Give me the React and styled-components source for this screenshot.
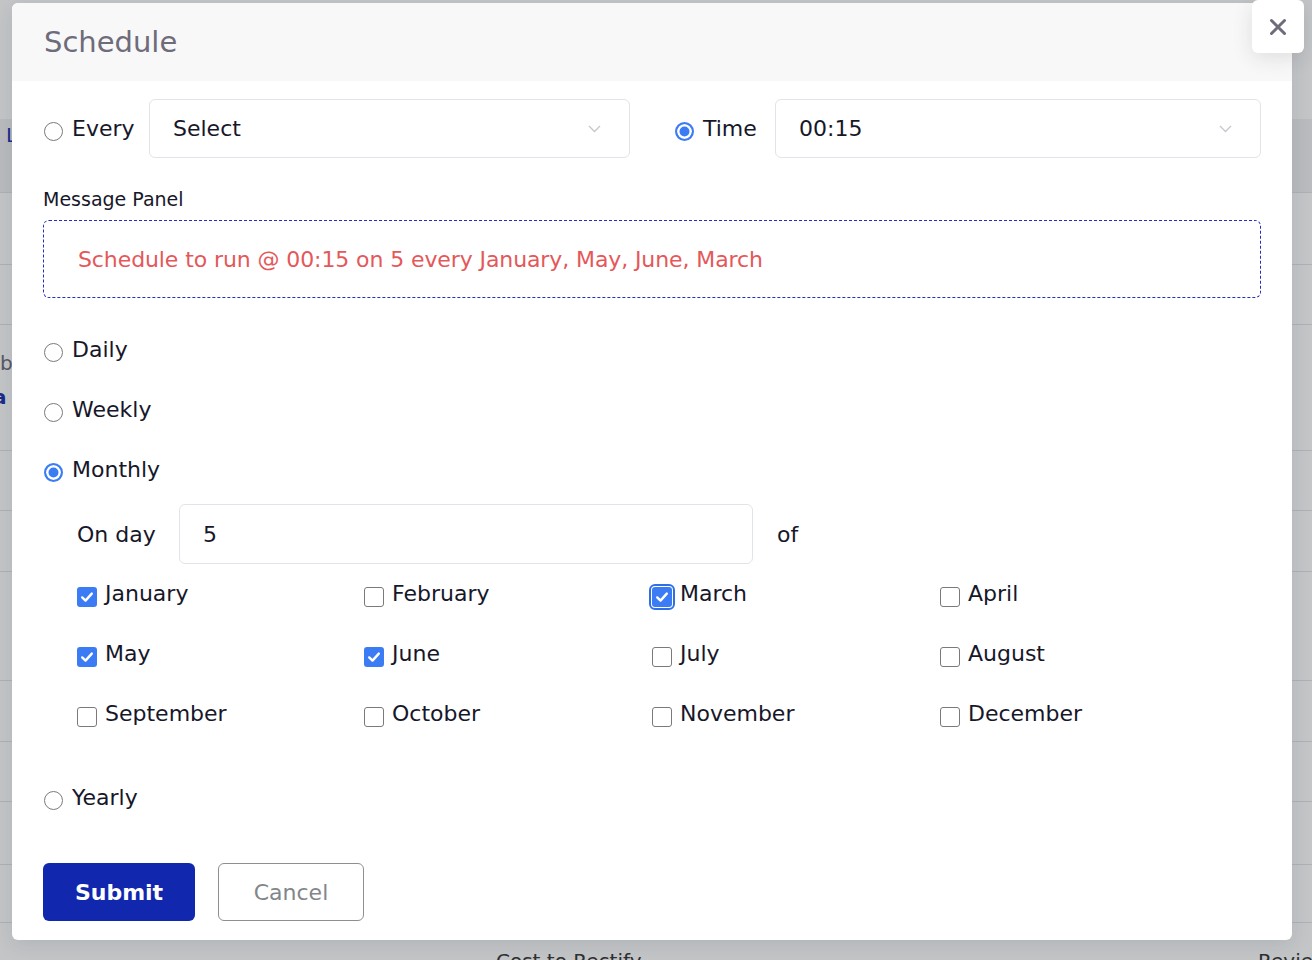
import React from 'react'
import styled, { createGlobalStyle } from 'styled-components'

const GlobalStyle = createGlobalStyle`
  html, body {
    margin: 0;
    padding: 0;
  }
  body {
    font-family: "DejaVu Sans", "Open Sans", sans-serif;
    background: #ffffff;
    color: #17172a;
    overflow: hidden;
  }
  * {
    box-sizing: border-box;
  }
`

const Screen = styled.div`
    position: relative;
    width: 1312px;
    height: 960px;
    overflow: hidden;
`

/* page behind the modal */
const BgPage = styled.div`
    padding-top: 119px;
`

const BgHead = styled.div`
    height: 74px;
    background: #f1f2f3;
    display: flex;
    align-items: flex-start;
    padding: 4px 0 0 6px;
    color: #1a2db0;
    font-size: 20px;
    border-bottom: 1px solid #e3e4e6;
`

const BgRow = styled.div`
    height: ${props => props.h}px;
    border-bottom: 1px solid #e3e4e6;
    display: flex;
    flex-direction: column;
    justify-content: flex-start;
    padding-top: 28px;
    gap: 14px;
`

const BgFrag = styled.span`
    display: block;
    margin-left: ${props => props.shift}px;
    font-size: 20px;
    font-weight: ${props => props.bold ? 700 : 400};
    color: ${props => props.blue ? '#1a2db0' : '#6e6b7b'};
    line-height: 20px;
`

const BgFoot = styled.div`
    display: grid;
    grid-template-columns: 496px 762px auto;
    padding-top: 26px;
    font-size: 20px;
    color: #333;
`

/* overlay + modal */
const Backdrop = styled.div`
    position: absolute;
    inset: 0;
    background: rgba(34, 41, 47, 0.27);
    padding: 3px 20px 0 12px;
`

const Modal = styled.div`
    position: relative;
    width: 1280px;
    background: #ffffff;
    border-radius: 6px;
    box-shadow: 0 5px 20px rgba(34, 41, 47, 0.1);
`

const Header = styled.div`
    height: 78px;
    background: #f8f8f8;
    border-radius: 6px 6px 0 0;
    padding: 0 32px;
    display: flex;
    align-items: center;
`

const Title = styled.h4`
    margin: 0;
    font-size: 29px;
    font-weight: 400;
    color: #6e6b7b;
`

const Close = styled.button`
    position: absolute;
    top: -3px;
    right: -12px;
    width: 52px;
    height: 53px;
    border: none;
    border-radius: 6px;
    background: #ffffff;
    box-shadow: 0 5px 20px rgba(34, 41, 47, 0.12);
    display: flex;
    align-items: center;
    justify-content: center;
    padding: 0;
`

const Body = styled.div`
    padding: 18px 31px 19px 31px;
    display: flex;
    flex-direction: column;
`

const TopRow = styled.div`
    display: flex;
    align-items: center;
    height: 59px;
`

const Choice = styled.label`
    display: flex;
    align-items: center;
    height: ${props => props.h || 60}px;
    font-size: 22px;
    line-height: 26px;
`

const Radio = styled.span`
    flex: none;
    width: 19px;
    height: 19px;
    margin: 5px 9px 0 ${props => props.ml ?? 1}px;
    border-radius: 50%;
    border: ${props => props.on ? '2px solid #3b7cf5' : '1.5px solid #7a7a7a'};
    background: ${props => props.on ? '#3b7cf5' : '#ffffff'};
    box-shadow: ${props => props.on ? 'inset 0 0 0 2.5px #ffffff' : 'none'};
`

const ChoiceText = styled.span`
    display: inline-block;
    width: ${props => props.w ? props.w + 'px' : 'auto'};
`

const Select = styled.div`
    width: ${props => props.w ? props.w + 'px' : 'auto'};
    flex: ${props => props.w ? 'none' : '1'};
    height: 59px;
    border: 1px solid #e3e4e9;
    border-radius: 6px;
    padding: 0 28px 0 23px;
    display: flex;
    align-items: center;
    justify-content: space-between;
    font-size: 22px;
    color: #17172a;
    background: #ffffff;
`

const Gap = styled.div`
    width: ${props => props.w}px;
    flex: none;
`

const FieldLabel = styled.div`
    margin-top: 30px;
    font-size: 19px;
    line-height: 22px;
    color: #17172a;
`

const MessageBox = styled.div`
    margin-top: 10px;
    height: 78px;
    border: 1px dashed #1f2fc4;
    border-radius: 6px;
    padding-left: 34px;
    display: flex;
    align-items: center;
    font-size: 22px;
    letter-spacing: -0.1px;
    color: #e4585a;
`

const FreqList = styled.div`
    margin-top: 22px;
    display: flex;
    flex-direction: column;
`

const DayRow = styled.div`
    margin-top: 4px;
    height: 60px;
    padding-left: 34px;
    display: flex;
    align-items: center;
    font-size: 22px;
`

const DayLabel = styled.span`
    width: 102px;
    flex: none;
`

const DayInput = styled.div`
    width: 574px;
    height: 60px;
    border: 1px solid #e3e4e9;
    border-radius: 6px;
    padding-left: 23px;
    display: flex;
    align-items: center;
`

const Of = styled.span`
    margin-left: 24px;
`

const MonthGrid = styled.div`
    padding-left: 34px;
    display: grid;
    grid-template-columns: 287px 287px 289px 1fr;
    grid-auto-rows: 60px;
`

const Month = styled.label`
    display: flex;
    align-items: center;
    font-size: 22px;
    line-height: 26px;
`

const Box = styled.span`
    flex: none;
    width: 20px;
    height: 20px;
    margin: 5px 8px 0 ${props => props.ml || 0}px;
    border-radius: 3px;
    border: ${props => props.on ? 'none' : '1.5px solid #7a7a7a'};
    background: ${props => props.on ? '#3b7cf5' : '#ffffff'};
    outline: ${props => props.focus ? '2px solid #2f6fe6' : 'none'};
    outline-offset: 1px;
    display: flex;
    align-items: center;
    justify-content: center;
`

const YearlyWrap = styled.div`
    margin-top: 24px;
`

const Actions = styled.div`
    margin-top: 35px;
    display: flex;
    gap: 23px;
`

const Button = styled.button`
    height: 58px;
    width: ${props => props.w}px;
    border-radius: 6px;
    font-family: inherit;
    font-size: 22px;
    font-weight: ${props => props.primary ? 700 : 400};
    color: ${props => props.primary ? '#ffffff' : '#82868b'};
    background: ${props => props.primary ? '#1128ae' : '#ffffff'};
    border: ${props => props.primary ? 'none' : '1px solid #8f8f8f'};
    padding: 0;
`

const Chevron = () => (
    <svg width="13" height="8" viewBox="0 0 13 8" fill="none">
        <polyline points="1,1 6.5,6.5 12,1" stroke="#c6c6ce" strokeWidth="1.3" />
    </svg>
)

const Tick = () => (
    <svg width="16" height="16" viewBox="0 0 16 16" fill="none">
        <path d="M3.2 8.4 L6.5 11.6 L12.8 4.6" stroke="#ffffff" strokeWidth="2.4" strokeLinecap="round" strokeLinejoin="round" />
    </svg>
)

const months = [
    { name: 'January', on: true },
    { name: 'February' },
    { name: 'March', on: true, focus: true, ml: 1 },
    { name: 'April' },
    { name: 'May', on: true },
    { name: 'June', on: true },
    { name: 'July', ml: 1 },
    { name: 'August' },
    { name: 'September' },
    { name: 'October' },
    { name: 'November', ml: 1 },
    { name: 'December' },
]

const bgRows = [72, 60, 126, 60, 61, 109, 61, 60, 63, 58]

export default function App() {
    return (
        <Screen>
            <GlobalStyle />
            <BgPage>
                <BgHead>Lab</BgHead>
                {bgRows.map((h, i) => (
                    <BgRow key={i} h={h}>
                        {i === 2 && (
                            <>
                                <BgFrag shift={0}>b</BgFrag>
                                <BgFrag shift={-7} blue bold>a</BgFrag>
                            </>
                        )}
                    </BgRow>
                ))}
                <BgFoot>
                    <span></span>
                    <span>Cost to Rectify</span>
                    <span>Review</span>
                </BgFoot>
            </BgPage>

            <Backdrop>
                <Modal>
                    <Header>
                        <Title>Schedule</Title>
                    </Header>
                    <Close aria-label="close">
                        <svg width="18" height="18" viewBox="0 0 18 18" fill="none">
                            <path d="M2.5 2.5 L15.5 15.5 M15.5 2.5 L2.5 15.5" stroke="#6e6b7b" strokeWidth="3" strokeLinecap="round" />
                        </svg>
                    </Close>

                    <Body>
                        <TopRow>
                            <Choice h={59}>
                                <Radio />
                                <ChoiceText w={77}>Every</ChoiceText>
                            </Choice>
                            <Select w={481}>
                                <span>Select</span>
                                <Chevron />
                            </Select>
                            <Gap w={45} />
                            <Choice h={59}>
                                <Radio on ml={0} />
                                <ChoiceText w={72}>Time</ChoiceText>
                            </Choice>
                            <Select>
                                <span>00:15</span>
                                <Chevron />
                            </Select>
                        </TopRow>

                        <FieldLabel>Message Panel</FieldLabel>
                        <MessageBox>
                            Schedule to run @ 00:15 on 5 every January, May, June, March
                        </MessageBox>

                        <FreqList>
                            <Choice>
                                <Radio />
                                <ChoiceText>Daily</ChoiceText>
                            </Choice>
                            <Choice>
                                <Radio />
                                <ChoiceText>Weekly</ChoiceText>
                            </Choice>
                            <Choice>
                                <Radio on />
                                <ChoiceText>Monthly</ChoiceText>
                            </Choice>

                            <DayRow>
                                <DayLabel>On day</DayLabel>
                                <DayInput>5</DayInput>
                                <Of>of</Of>
                            </DayRow>

                            <MonthGrid>
                                {months.map(m => (
                                    <Month key={m.name}>
                                        <Box on={m.on} focus={m.focus} ml={m.ml}>
                                            {m.on && <Tick />}
                                        </Box>
                                        {m.name}
                                    </Month>
                                ))}
                            </MonthGrid>

                            <YearlyWrap>
                                <Choice>
                                    <Radio />
                                    <ChoiceText>Yearly</ChoiceText>
                                </Choice>
                            </YearlyWrap>
                        </FreqList>

                        <Actions>
                            <Button primary w={152}>Submit</Button>
                            <Button w={146}>Cancel</Button>
                        </Actions>
                    </Body>
                </Modal>
            </Backdrop>
        </Screen>
    )
}
